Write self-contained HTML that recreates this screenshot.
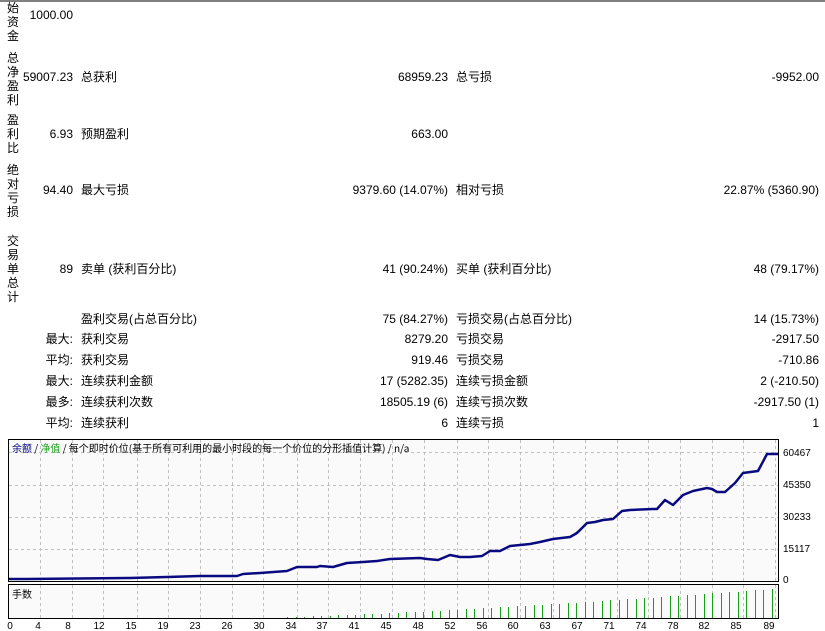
<!DOCTYPE html>
<html><head><meta charset="utf-8"><style>
body{margin:0;width:825px;height:631px;background:#fff;position:relative;overflow:hidden;font-family:"Liberation Sans","Noto Sans CJK SC",sans-serif;font-size:12px;color:#000}
.t{position:absolute;white-space:nowrap;line-height:14px}
.r{text-align:right}
.v{position:absolute;left:6px;width:14px;line-height:14px;text-align:center;font-size:12px}
</style></head><body>
<div style="position:absolute;left:0;top:0;width:825px;height:2px;background:#808080"></div>
<div class="v" style="top:1px">始<br>资<br>金</div>
<div class="v" style="top:51px">总<br>净<br>盈<br>利</div>
<div class="v" style="top:113px">盈<br>利<br>比</div>
<div class="v" style="top:163px">绝<br>对<br>亏<br>损</div>
<div class="v" style="top:234px">交<br>易<br>单<br>总<br>计</div>

<div class="t r" style="right:752px;top:8px">1000.00</div>

<div class="t r" style="right:752px;top:70px">59007.23</div>
<div class="t" style="left:81px;top:70px">总获利</div>
<div class="t r" style="right:377px;top:70px">68959.23</div>
<div class="t" style="left:456px;top:70px">总亏损</div>
<div class="t r" style="right:6px;top:70px">-9952.00</div>

<div class="t r" style="right:752px;top:127px">6.93</div>
<div class="t" style="left:81px;top:127px">预期盈利</div>
<div class="t r" style="right:377px;top:127px">663.00</div>

<div class="t r" style="right:752px;top:183px">94.40</div>
<div class="t" style="left:81px;top:183px">最大亏损</div>
<div class="t r" style="right:377px;top:183px">9379.60 (14.07%)</div>
<div class="t" style="left:456px;top:183px">相对亏损</div>
<div class="t r" style="right:6px;top:183px">22.87% (5360.90)</div>

<div class="t r" style="right:752px;top:262px">89</div>
<div class="t" style="left:81px;top:262px">卖单 (获利百分比)</div>
<div class="t r" style="right:377px;top:262px">41 (90.24%)</div>
<div class="t" style="left:456px;top:262px">买单 (获利百分比)</div>
<div class="t r" style="right:6px;top:262px">48 (79.17%)</div>

<div class="t" style="left:81px;top:312px">盈利交易(占总百分比)</div>
<div class="t r" style="right:377px;top:312px">75 (84.27%)</div>
<div class="t" style="left:456px;top:312px">亏损交易(占总百分比)</div>
<div class="t r" style="right:6px;top:312px">14 (15.73%)</div>

<div class="t r" style="right:752px;top:332px">最大:</div>
<div class="t" style="left:81px;top:332px">获利交易</div>
<div class="t r" style="right:377px;top:332px">8279.20</div>
<div class="t" style="left:456px;top:332px">亏损交易</div>
<div class="t r" style="right:6px;top:332px">-2917.50</div>

<div class="t r" style="right:752px;top:353px">平均:</div>
<div class="t" style="left:81px;top:353px">获利交易</div>
<div class="t r" style="right:377px;top:353px">919.46</div>
<div class="t" style="left:456px;top:353px">亏损交易</div>
<div class="t r" style="right:6px;top:353px">-710.86</div>

<div class="t r" style="right:752px;top:374px">最大:</div>
<div class="t" style="left:81px;top:374px">连续获利金额</div>
<div class="t r" style="right:377px;top:374px">17 (5282.35)</div>
<div class="t" style="left:456px;top:374px">连续亏损金额</div>
<div class="t r" style="right:6px;top:374px">2 (-210.50)</div>

<div class="t r" style="right:752px;top:395px">最多:</div>
<div class="t" style="left:81px;top:395px">连续获利次数</div>
<div class="t r" style="right:377px;top:395px">18505.19 (6)</div>
<div class="t" style="left:456px;top:395px">连续亏损次数</div>
<div class="t r" style="right:6px;top:395px">-2917.50 (1)</div>

<div class="t r" style="right:752px;top:416px">平均:</div>
<div class="t" style="left:81px;top:416px">连续获利</div>
<div class="t r" style="right:377px;top:416px">6</div>
<div class="t" style="left:456px;top:416px">连续亏损</div>
<div class="t r" style="right:6px;top:416px">1</div>

<svg style="position:absolute;left:0;top:0" width="825" height="631">
<rect x="8.5" y="439.5" width="770" height="142" fill="#fafafa" stroke="#000"/>
<rect x="8.5" y="584.5" width="770" height="34" fill="#fafafa" stroke="#000"/>
<g id="grid" stroke="#c0c0c0" stroke-dasharray="3,3" fill="none"></g>
<g id="bars" stroke="#19a019"></g>
<polyline fill="none" stroke="#2a9a2a" stroke-width="1" points="570,537 578,531 586,525"/>
<polyline fill="none" stroke="#0a0a80" stroke-width="2.5" stroke-linejoin="round" points="9,579 27,579 130,578 167,577 200,576 237,576 243,574 260,573 287,571 297,567 317,567 320,566 333,567 340,565 347,563 363,562 377,561 390,559 420,558 427,559 438,560 450,555 460,557 470,557 482,556 490,551 500,551 510,546 520,545 530,544 540,542 553,539 570,537 577,533 587,523 595,522 603,520 613,519 622,511 630,510 653,509 657,509 665,500 673,505 683,495 693,491 707,488 712,489 717,492 725,492 735,483 743,473 758,471 767,454 778,454"/>
<text x="12" y="452" font-size="10" font-family="Noto Sans CJK SC,sans-serif" fill="#000"><tspan fill="#000080">余额</tspan> / <tspan fill="#19a019">净值</tspan> / 每个即时价位(基于所有可利用的最小时段的每一个价位的分形插值计算) / n/a</text>
<text x="12" y="598" font-size="10" font-family="Noto Sans CJK SC,sans-serif">手数</text>
<g font-size="10" font-family="Liberation Sans,sans-serif" id="ylab">
<text x="783" y="456">60467</text><text x="783" y="488">45350</text><text x="783" y="520">30233</text><text x="783" y="552">15117</text><text x="783" y="583">0</text>
</g>
<g font-size="10" font-family="Liberation Sans,sans-serif" id="xlab" text-anchor="middle"></g>
</svg>
<script>
var ns="http://www.w3.org/2000/svg";
var g=document.getElementById("grid"),b=document.getElementById("bars"),xl=document.getElementById("xlab");
function el(p,t,a){var e=document.createElementNS(ns,t);for(var k in a)e.setAttribute(k,a[k]);p.appendChild(e);return e;}
[452,485,517,549].forEach(function(y){el(g,"line",{x1:9,x2:778,y1:y+.5,y2:y+.5});});
var xs=[40,72,103,137,168,200,232,263,297,328,360,392,424,457,488,520,553,585,617,648,680,712,743,775];
xs.forEach(function(x){el(g,"line",{x1:x+.5,x2:x+.5,y1:440,y2:581});el(g,"line",{x1:x+.5,x2:x+.5,y1:585,y2:618});});
var labs=[0,4,8,12,15,19,23,26,30,34,37,41,45,48,52,56,60,63,67,71,74,78,82,85,89];
var lx=[10,38,68,99,131,163,195,227,259,291,322,354,386,418,450,482,513,545,577,609,641,673,704,736,769];
labs.forEach(function(v,i){var t=el(xl,"text",{x:lx[i],y:629});t.textContent=v;});
for(var i=0;i<60;i++){var x=287+i*8.5;if(x>777)break;var h=1+Math.round(Math.pow(i/57,1.3)*28);el(b,"line",{x1:Math.round(x)+.5,x2:Math.round(x)+.5,y1:618,y2:618-h});}
</script>
</body></html>
